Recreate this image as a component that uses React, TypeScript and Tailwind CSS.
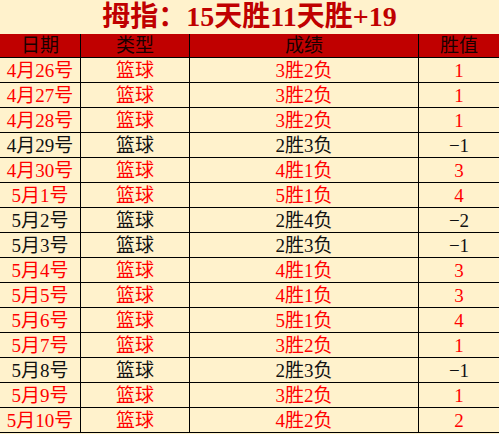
const rows: [string, string, string, string, boolean][] = [
  ["4月26号", "篮球", "3胜2负", "1", true],
  ["4月27号", "篮球", "3胜2负", "1", true],
  ["4月28号", "篮球", "3胜2负", "1", true],
  ["4月29号", "篮球", "2胜3负", "−1", false],
  ["4月30号", "篮球", "4胜1负", "3", true],
  ["5月1号", "篮球", "5胜1负", "4", true],
  ["5月2号", "篮球", "2胜4负", "−2", false],
  ["5月3号", "篮球", "2胜3负", "−1", false],
  ["5月4号", "篮球", "4胜1负", "3", true],
  ["5月5号", "篮球", "4胜1负", "3", true],
  ["5月6号", "篮球", "5胜1负", "4", true],
  ["5月7号", "篮球", "3胜2负", "1", true],
  ["5月8号", "篮球", "2胜3负", "−1", false],
  ["5月9号", "篮球", "3胜2负", "1", true],
  ["5月10号", "篮球", "4胜2负", "2", true],
];

const cols = "grid grid-cols-[81px_109px_229px_80px]";
const cell = "flex items-end justify-center border-b border-black pb-[2px]";

export default function App() {
  return (
    <div
      className="w-[499px] h-[434px] bg-[#fff2cc] overflow-hidden"
      style={{ fontFamily: '"Liberation Serif", "Noto Sans CJK SC", serif' }}
    >
      {/* 标题 */}
      <div className="h-[34px] flex items-center justify-center text-[28px] font-bold text-[#c00000] leading-none pb-[1px]">
        拇指：15天胜11天胜+19
      </div>

      {/* 表头 */}
      <div className={`${cols} h-[24px] bg-[#c00000] text-[19px] leading-none text-[#1a0000]`}>
        <div className={`${cell} border-r`}>日期</div>
        <div className={`${cell} border-r`}>类型</div>
        <div className={`${cell} border-r`}>成绩</div>
        <div className={cell}>胜值</div>
      </div>

      {/* 数据 */}
      {rows.map(([date, type, score, value, win]) => (
        <div
          key={date}
          className={`${cols} h-[25px] text-[19px] leading-none ${win ? "text-[#ff0000]" : "text-[#111111]"}`}
        >
          <div className={`${cell} border-r`}>{date}</div>
          <div className={`${cell} border-r`}>{type}</div>
          <div className={`${cell} border-r`}>{score}</div>
          <div className={cell}>{value}</div>
        </div>
      ))}
    </div>
  );
}
